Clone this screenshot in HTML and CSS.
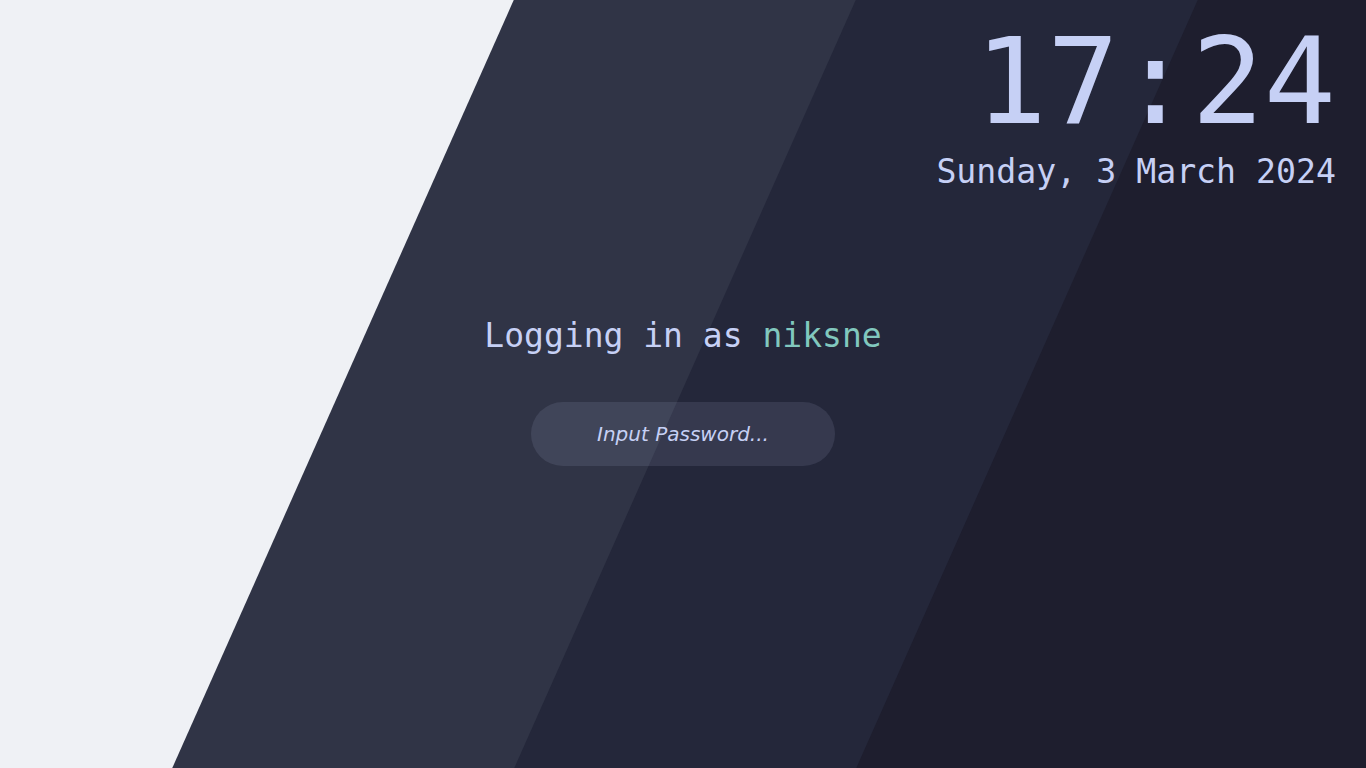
FILE: index.html
```html
<!DOCTYPE html>
<html lang="en">
<head>
<meta charset="utf-8">
<title>Lock screen</title>
<link rel="stylesheet" href="styles.css">
</head>
<body>
<div class="screen">
  <div class="stripes" aria-hidden="true">
    <div class="stripe latte"></div>
    <div class="stripe frappe"></div>
    <div class="stripe macchiato"></div>
    <div class="stripe mocha"></div>
  </div>
  <div class="content">
    <header class="clock-block">
      <div class="clock">17:24</div>
      <div class="date">Sunday, 3 March 2024</div>
    </header>
    <main class="login">
      <div class="greeting">Logging in as <span class="user">niksne</span></div>
      <input class="password" type="password" placeholder="Input Password...">
    </main>
  </div>
</div>
</body>
</html>
```

FILE: styles.css
```css
html, body {
  margin: 0;
  padding: 0;
  background: #eff1f5;
}

.screen {
  position: relative;
  width: 1366px;
  height: 768px;
  overflow: hidden;
  background: #eff1f5;
}

.stripes {
  position: absolute;
  top: 0;
  bottom: 0;
  left: -200px;
  right: -200px;
  display: flex;
  transform: skewX(-23.97deg);
  transform-origin: center;
  z-index: 0;
}

/* each stripe overlaps the next by 3px so skewed edges leave no seams */
.stripe {
  position: relative;
  height: 100%;
  margin-right: -3px;
}
.latte { flex: 0 0 545.5px; background: #eff1f5; }
.frappe { flex: 0 0 345.5px; background: #303446; }
.macchiato { flex: 0 0 344.5px; background: #24273a; }
.mocha { flex: 1 1 auto; background: #1e1e2e; margin-right: 0; }

.content {
  position: relative;
  z-index: 1;
  height: 100%;
  display: flex;
  flex-direction: column;
  font-family: "DejaVu Sans Mono", "Liberation Mono", monospace;
  color: #c6d0f5;
}

.clock-block {
  display: flex;
  flex-direction: column;
  align-items: flex-end;
  padding: 22px 30px 0 0;
}

.clock {
  font-size: 120px;
  line-height: 120px;
  color: #c6d0f5;
}

.date {
  margin-top: 10px;
  font-size: 33.2px;
  line-height: 1.2;
  color: #c6d0f5;
}

.login {
  display: flex;
  flex-direction: column;
  align-items: center;
  margin-top: 124px;
}

.greeting {
  font-size: 33px;
  line-height: 1.2;
  color: #c6d0f5;
  white-space: pre;
}

.user { color: #81c8be; }

.password {
  margin-top: 47px;
  box-sizing: border-box;
  width: 304px;
  height: 64px;
  border: none;
  border-radius: 32px;
  background: rgba(198, 208, 245, 0.11);
  outline: none;
  padding: 0 16px;
  text-align: center;
  font-family: "DejaVu Sans", "Liberation Sans", sans-serif;
  font-style: italic;
  font-size: 20px;
  color: #c6d0f5;
}

.password::placeholder {
  color: #c6d0f5;
  opacity: 1;
  font-style: italic;
}
```
